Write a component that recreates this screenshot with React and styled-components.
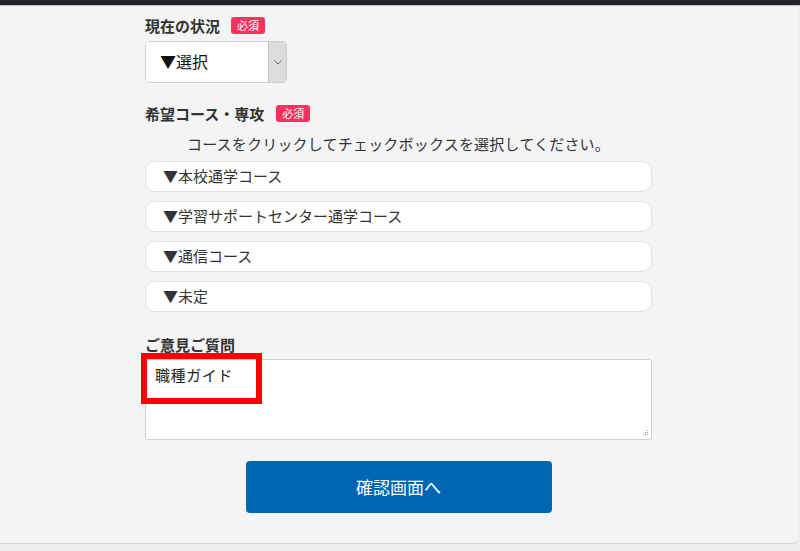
import styled, { createGlobalStyle } from 'styled-components'

const GlobalStyle = createGlobalStyle`
    html, body {
        margin: 0;
        padding: 0;
        background: #efefef;
        font-family: "Noto Sans CJK JP", "Noto Sans", sans-serif;
        color: #333;
    }
`

const TopBar = styled.div`
    height: 5px;
    background: #202428;
    border-bottom: 1px solid #c4c4c4;
`

const Card = styled.div`
    margin-right: 2px;
    background: #f4f4f4;
    border-bottom: 1px solid #d2d2d2;
    border-bottom-right-radius: 6px;
    box-shadow: 0 1px 2px rgba(0, 0, 0, 0.06);
    padding: 8px 0 30px 0;
`

const Form = styled.form`
    width: 507px;
    margin-left: 145px;
    display: flex;
    flex-direction: column;
`

const Label = styled.div`
    display: flex;
    align-items: center;
    height: 22px;
    font-size: 15px;
    font-weight: bold;
    color: #333;
    margin-top: ${(p) => p.$top || 0}px;
`

const Badge = styled.span`
    display: inline-flex;
    align-items: center;
    justify-content: center;
    height: 17px;
    padding: 0 6px;
    margin-left: ${(p) => p.$gap || 11}px;
    background: #f5335e;
    border-radius: 3px;
    color: #fff;
    font-size: 11px;
    font-weight: normal;
    line-height: 1;
`

const SelectBox = styled.div`
    display: flex;
    width: 142px;
    height: 42px;
    margin-top: 5px;
    box-sizing: border-box;
    border: 1px solid #cfcfcf;
    border-radius: 4px;
    background: #fff;
    overflow: hidden;
`

const Select = styled.select`
    appearance: none;
    flex: 1;
    border: none;
    outline: none;
    background: #fff;
    padding: 0 0 2px 14px;
    font-family: inherit;
    font-size: 16px;
    color: #111;
`

const SelectArrow = styled.div`
    width: 17px;
    display: flex;
    align-items: center;
    justify-content: center;
    background: #dcdcdc;
    border-left: 1px solid #c4c4c4;
`

const Helper = styled.p`
    margin: 9px 0 6px 0;
    height: 22px;
    line-height: 22px;
    font-size: 15px;
    letter-spacing: 0.2px;
    text-align: center;
    color: #333;
`

const CourseList = styled.div`
    display: flex;
    flex-direction: column;
    gap: 9px;
`

const Course = styled.div`
    height: 31px;
    box-sizing: border-box;
    display: flex;
    align-items: center;
    padding: 0 0 3px 17px;
    background: #fff;
    border: 1px solid #e3e3e3;
    border-radius: 10px;
    font-size: 15px;
    color: #333;
`

const AreaWrap = styled.div`
    position: relative;
    margin-top: 4px;
`

const TextArea = styled.textarea`
    display: block;
    width: 100%;
    height: 81px;
    box-sizing: border-box;
    border: 1px solid #cfcfcf;
    border-radius: 3px;
    background: #fff;
    padding: 4px 9px;
    resize: none;
    font-family: "Noto Sans CJK JP", monospace;
    font-size: 15px;
    letter-spacing: 0.6px;
    line-height: 22px;
    color: #222;
    outline: none;
`

const Highlight = styled.div`
    position: absolute;
    left: -4px;
    top: -6px;
    width: 121px;
    height: 51px;
    box-sizing: border-box;
    border: 6px solid #ff0000;
    pointer-events: none;
`

const Grip = styled.svg`
    position: absolute;
    right: 3px;
    bottom: 3px;
`

const Submit = styled.button`
    align-self: center;
    margin-top: 21px;
    width: 306px;
    height: 52px;
    border: none;
    border-radius: 4px;
    background: #0066b4;
    color: #fff;
    font-family: inherit;
    font-size: 17px;
    padding-bottom: 3px;
    cursor: pointer;
`

const courses = ['本校通学コース', '学習サポートセンター通学コース', '通信コース', '未定']

function App() {
    return (
        <>
            <GlobalStyle />
            <TopBar />
            <Card>
                <Form onSubmit={(e) => e.preventDefault()}>
                    <Label>現在の状況<Badge>必須</Badge></Label>
                    <SelectBox>
                        <Select defaultValue="">
                            <option value="">▼選択</option>
                        </Select>
                        <SelectArrow>
                            <svg width="8" height="5" viewBox="0 0 8 5">
                                <polyline points="0.5,0.5 4,4 7.5,0.5" fill="none" stroke="#666" strokeWidth="1" />
                            </svg>
                        </SelectArrow>
                    </SelectBox>

                    <Label $top={19}>希望コース・専攻<Badge $gap={12}>必須</Badge></Label>
                    <Helper>コースをクリックしてチェックボックスを選択してください。</Helper>
                    <CourseList>
                        {courses.map((c) => (
                            <Course key={c}>▼{c}</Course>
                        ))}
                    </CourseList>

                    <Label $top={21}>ご意見ご質問</Label>
                    <AreaWrap>
                        <TextArea defaultValue="職種ガイド" />
                        <Highlight />
                        <Grip width="7" height="7" viewBox="0 0 7 7">
                            <g fill="#999">
                                <rect x="5" y="0" width="1" height="1" />
                                <rect x="3" y="2" width="1" height="1" />
                                <rect x="5" y="2" width="1" height="1" />
                                <rect x="1" y="4" width="1" height="1" />
                                <rect x="3" y="4" width="1" height="1" />
                                <rect x="5" y="4" width="1" height="1" />
                            </g>
                        </Grip>
                    </AreaWrap>

                    <Submit type="submit">確認画面へ</Submit>
                </Form>
            </Card>
        </>
    )
}

export default App
